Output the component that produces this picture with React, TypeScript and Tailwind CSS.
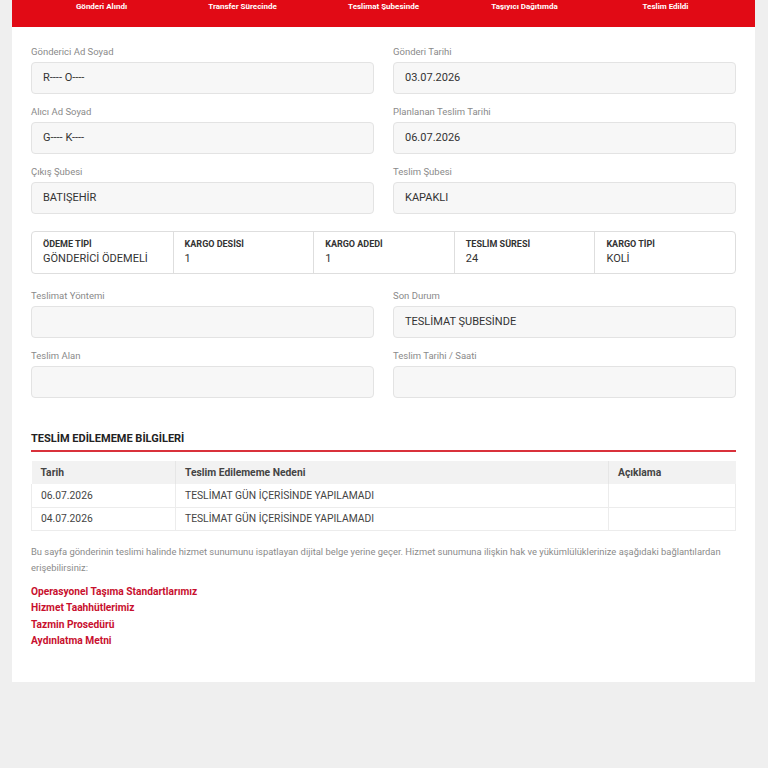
import React from "react";

const steps = [
  "Gönderi Alındı",
  "Transfer Sürecinde",
  "Teslimat Şubesinde",
  "Taşıyıcı Dağıtımda",
  "Teslim Edildi",
];

const summary = [
  { title: "ÖDEME TİPİ", value: "GÖNDERİCİ ÖDEMELİ" },
  { title: "KARGO DESİSİ", value: "1" },
  { title: "KARGO ADEDİ", value: "1" },
  { title: "TESLİM SÜRESİ", value: "24" },
  { title: "KARGO TİPİ", value: "KOLİ" },
];

const failures = [
  { date: "06.07.2026", reason: "TESLİMAT GÜN İÇERİSİNDE YAPILAMADI", note: "" },
  { date: "04.07.2026", reason: "TESLİMAT GÜN İÇERİSİNDE YAPILAMADI", note: "" },
];

const links = [
  "Operasyonel Taşıma Standartlarımız",
  "Hizmet Taahhütlerimiz",
  "Tazmin Prosedürü",
  "Aydınlatma Metni",
];

const Field = ({ label, value }: { label: string; value?: string }) => (
  <div className="flex flex-col">
    <label className="text-[9.5px] leading-[12px] text-[#8a8a8a] mb-[4px]">{label}</label>
    <div className="h-[32px] rounded-[4px] border border-[#e3e3e3] bg-[#f7f7f7] px-[11px] flex items-center text-[11px] text-[#333]">
      {value}
    </div>
  </div>
);

export default function App() {
  return (
    <div className="min-h-[768px] bg-[#efefef] font-['Roboto',sans-serif]">
      <div className="mx-[12px] w-[743px] bg-white pb-[32px]">
        {/* step labels under the tracking bar */}
        <div className="h-[27px] bg-[#e10a15] px-[19px] grid grid-cols-5 items-start pt-[2px]">
          {steps.map((s) => (
            <div key={s} className="text-center text-[8px] font-bold text-white leading-[10px]">
              {s}
            </div>
          ))}
        </div>

        <div className="px-[19px] pt-[19px]">
          <div className="grid grid-cols-2 gap-x-[19px] gap-y-[12px]">
            <Field label="Gönderici Ad Soyad" value="R---- O----" />
            <Field label="Gönderi Tarihi" value="03.07.2026" />
            <Field label="Alıcı Ad Soyad" value="G---- K----" />
            <Field label="Planlanan Teslim Tarihi" value="06.07.2026" />
            <Field label="Çıkış Şubesi" value="BATIŞEHİR" />
            <Field label="Teslim Şubesi" value="KAPAKLI" />
          </div>

          <div className="mt-[17px] h-[43px] grid grid-cols-5 rounded-[4px] border border-[#dedede]">
            {summary.map((s, i) => (
              <div
                key={s.title}
                className={`px-[11px] pt-[6px] ${i > 0 ? "border-l border-[#dedede]" : ""}`}
              >
                <div className="text-[9px] font-bold leading-[12px] text-[#333]">{s.title}</div>
                <div className="mt-[1px] text-[11px] leading-[16px] text-[#333]">{s.value}</div>
              </div>
            ))}
          </div>

          <div className="mt-[16px] grid grid-cols-2 gap-x-[19px] gap-y-[12px]">
            <Field label="Teslimat Yöntemi" />
            <Field label="Son Durum" value="TESLİMAT ŞUBESİNDE" />
            <Field label="Teslim Alan" />
            <Field label="Teslim Tarihi / Saati" />
          </div>

          <h3 className="mt-[34px] text-[11px] font-bold text-[#222] leading-[14px] pb-[4px] border-b-2 border-[#d9313b]">
            TESLİM EDİLEMEME BİLGİLERİ
          </h3>

          <table className="mt-[9px] w-full table-fixed border-collapse text-[10.3px] text-[#444]">
            <colgroup>
              <col className="w-[144px]" />
              <col />
              <col className="w-[127px]" />
            </colgroup>
            <thead>
              <tr className="bg-[#f2f2f2] h-[23px]">
                <th className="text-left font-bold px-[9px] border-r border-[#e6e6e6]">Tarih</th>
                <th className="text-left font-bold px-[9px] border-r border-[#e6e6e6]">Teslim Edilememe Nedeni</th>
                <th className="text-left font-bold px-[9px]">Açıklama</th>
              </tr>
            </thead>
            <tbody>
              {failures.map((f, i) => (
                <tr key={i} className="h-[23px] border-b border-[#ececec]">
                  <td className="px-[9px] border-r border-l border-[#ececec]">{f.date}</td>
                  <td className="px-[9px] border-r border-[#ececec]">{f.reason}</td>
                  <td className="px-[9px] border-r border-[#ececec]">{f.note}</td>
                </tr>
              ))}
            </tbody>
          </table>

          <p className="mt-[13px] text-[9.4px] leading-[16px] text-[#8a8a8a]">
            Bu sayfa gönderinin teslimi halinde hizmet sunumunu ispatlayan dijital belge yerine geçer. Hizmet sunumuna ilişkin hak ve yükümlülüklerinize aşağıdaki bağlantılardan erişebilirsiniz:
          </p>

          <div className="mt-[8px] flex flex-col">
            {links.map((l) => (
              <a key={l} href="#" className="text-[10.2px] leading-[16.5px] font-bold text-[#c8102e]">
                {l}
              </a>
            ))}
          </div>
        </div>
      </div>
    </div>
  );
}
